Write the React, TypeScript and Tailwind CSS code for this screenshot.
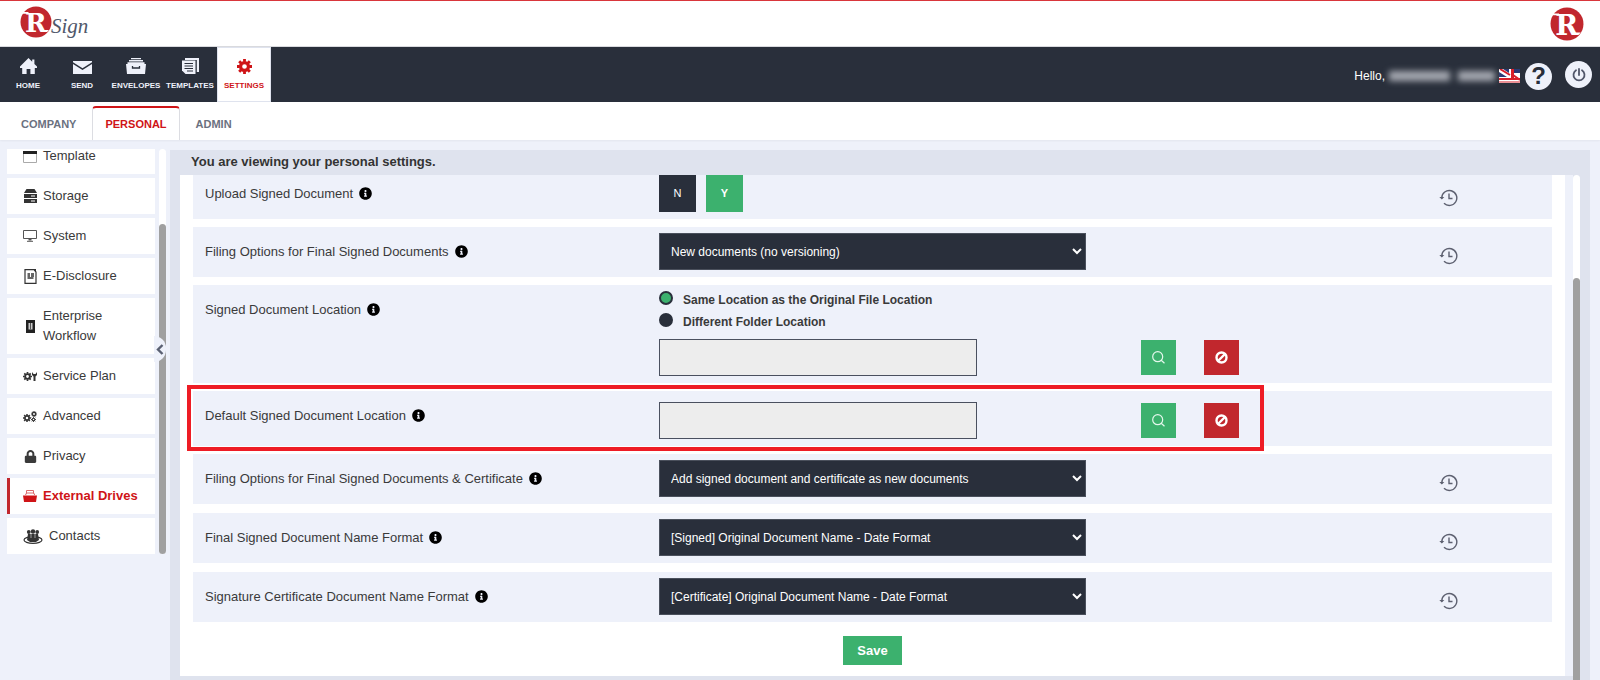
import React, { useState } from "react"
import { FaInfoCircle, FaLock } from "react-icons/fa"

/* ---------- icons ---------- */

const HomeIcon = () => (
    <svg width="17" height="16" viewBox="0 0 17 16" fill="currentColor">
        <path d="M8.500 0 0 8.600V10h2.200v6h4.400v-5h3.800v5h4.400v-6H17V8.600l-2.600-2.700V1.600h-2.200v2.100z" />
    </svg>
)

const SendIcon = () => (
    <svg width="19" height="13" viewBox="0 0 19 13" fill="currentColor">
        <path d="M0 0h19v1.300L9.500 7.200 0 1.300z" />
        <path d="M0 3l9.500 6L19 3v10H0z" />
    </svg>
)

const EnvelopesIcon = () => (
    <svg width="20" height="16" viewBox="0 0 20 16" fill="currentColor">
        <path d="M5 0h10v1.200H5zM3 2h14v1.500H3zM1.500 4.300h17V6H20l-1 10H1L0 6h1.500z" />
        <path d="M6.500 8v2h7V8" fill="none" stroke="#292f3b" strokeWidth="1.300" />
    </svg>
)

const TemplatesIcon = () => (
    <svg width="17" height="16" viewBox="0 0 17 16" fill="currentColor">
        <path d="M3 0h14v14h-2.200V2H3z" />
        <path d="M0 2.500h13.500V16H3.500L0 12.500z" />
        <path d="M2.500 5.500h8.500M2.500 8h8.500M2.500 10.500h8.500M5 13h6" stroke="#292f3b" strokeWidth="1" />
    </svg>
)

// eight-tooth gear, teeth are drawn as short spokes
const GearIcon = ({ size }: { size: number }) => (
    <svg width={size} height={size} viewBox="0 0 16 16" fill="none" stroke="currentColor">
        <circle cx="8" cy="8" r="4.200" strokeWidth="3.400" />
        <path d="M8 0v3M8 13v3M0 8h3M13 8h3M2.300 2.300l2.200 2.200M11.500 11.500l2.200 2.200M13.700 2.300l-2.200 2.200M4.500 11.500l-2.200 2.200" strokeWidth="3" />
    </svg>
)

const PowerIcon = () => (
    <svg width="14" height="14" viewBox="0 0 14 14" fill="none" stroke="#50566a" strokeWidth="1.800" strokeLinecap="round">
        <path d="M4 2.300a5.500 5.500 0 1 0 6 0M7 1v6" />
    </svg>
)

const FlagIcon = () => (
    <svg width="21" height="14" viewBox="0 0 21 14">
        <path fill="#fff" d="M0 0h21v14H0z" />
        <path fill="#2b3a74" d="M0 3l8 5H0zM4 0h6v4zM15 0h6v4h-6z" />
        <path stroke="#d8202a" strokeWidth="2" d="M1 0l10 6M21 11l-7-5" />
        <path fill="#d8202a" d="M12 0h3v9h6v2H0V9h12zM0 12.500h21v1H0z" />
    </svg>
)

const HistoryIcon = () => (
    <svg width="19" height="18" viewBox="0 0 19 18" fill="none" stroke="#5d6070" strokeWidth="1.400">
        <path d="M2.800 9.500V9A7.500 7.500 0 1 1 5 14.300" />
        <path d="M10 4.500v5h3.500" />
        <path d="M.3 8l2.500 2.600L5.300 8z" fill="#5d6070" stroke="none" />
    </svg>
)

const SearchIcon = () => (
    <svg width="13" height="13" viewBox="0 0 13 13" fill="none" stroke="#e4f7ec" strokeWidth="1.200">
        <circle cx="5.700" cy="5.700" r="5" />
        <path d="M9.200 9.200l3.300 3" />
    </svg>
)

const BanIcon = () => (
    <svg width="13" height="13" viewBox="0 0 13 13" fill="none" stroke="#fff" strokeWidth="2.400">
        <circle cx="6.500" cy="6.500" r="5" />
        <path d="M10 3l-7 7" />
    </svg>
)

const TemplateIcon = () => (
    <svg width="14" height="13" viewBox="0 0 14 13">
        <path d="M.5 1.500h13v11H.5z" fill="#fff" stroke="#aaa" />
        <path d="M0 1h14v3H0z" fill="#222" />
    </svg>
)

const StorageIcon = () => (
    <svg width="13" height="14" viewBox="0 0 13 14" fill="#333">
        <path d="M2.500 0h8L13 4H0zM0 5h13v4H0zM0 10h13v4H0z" />
        <path d="M7 7h4M7 12h4" stroke="#fff" />
    </svg>
)

const SystemIcon = () => (
    <svg width="14" height="12" viewBox="0 0 14 12" fill="none" stroke="#555">
        <path d="M.5.5h13v8H.5z" />
        <path d="M7 8.500v2" strokeWidth="3" />
        <path d="M4 11.300h6" />
    </svg>
)

const DisclosureIcon = () => (
    <svg width="13" height="15" viewBox="0 0 13 15" fill="none" stroke="#333">
        <path d="M1 .7h9L12 3v11.300H1z" strokeWidth="1.200" />
        <path d="M9 0h3v3z" fill="#333" stroke="none" />
        <path d="M3.500 5h2.500M3.500 7h2.500M7 5h3M7 7h3M3.500 9h6" strokeWidth="1.300" />
    </svg>
)

const WorkflowIcon = () => (
    <svg width="9" height="13" viewBox="0 0 9 13">
        <path d="M0 0h9v13H0z" fill="#222" />
        <path d="M2.500 3h4v6.500h-4z" fill="#ccc" />
        <path d="M4.500 3v6.500" stroke="#555" />
    </svg>
)

const ServiceIcon = () => (
    <span className="flex items-center text-[#333]">
        <GearIcon size={9} />
        <svg width="5" height="9" viewBox="0 0 5 9" fill="#333">
            <path d="M0 0l1.500 2h2L5 0v3L3.500 4.500V9h-2V4.500L0 3z" />
        </svg>
    </span>
)

const AdvancedIcon = () => (
    <span className="flex items-end text-[#333]">
        <GearIcon size={8} />
        <span className="flex flex-col">
            <GearIcon size={6} />
            <GearIcon size={5} />
        </span>
    </span>
)

const DrivesIcon = () => (
    <svg width="14" height="12" viewBox="0 0 14 12" fill="#cf1417">
        <path d="M3.500 3.500v-3h7v3M2.500 5l1-2h7.200l1 2" fill="none" stroke="#dc6a6c" />
        <path d="M0 5.500h14L13 12H1z" />
    </svg>
)

const ContactsIcon = () => (
    <svg width="20" height="15" viewBox="0 0 20 15" fill="#333">
        <ellipse cx="10" cy="11" rx="9" ry="3.300" fill="none" stroke="#333" strokeWidth="1.200" />
        <circle cx="5.800" cy="3" r="1.900" />
        <circle cx="10" cy="2.500" r="2.200" />
        <circle cx="14.200" cy="3" r="1.900" />
        <path d="M4 11l1-6h10l1 6-3 2H7z" />
        <path d="M8 5v4M12 5v4" stroke="#ccc" strokeWidth=".7" />
    </svg>
)

const RBadge = () => (
    <>
        <circle cx="16" cy="16" r="15.500" fill="#c1272d" />
        <path d="M2.500 6h6v1.800h-7zM21 24h8l-2 2h-6z" fill="#fff" />
        <text x="5" y="26" fontSize="26" fontWeight="bold" fill="#fff" className="font-['DejaVu_Serif',serif]">R</text>
    </>
)

/* ---------- data ---------- */

const navItems = [
    { label: "HOME", icon: <HomeIcon /> },
    { label: "SEND", icon: <SendIcon /> },
    { label: "ENVELOPES", icon: <EnvelopesIcon /> },
    { label: "TEMPLATES", icon: <TemplatesIcon /> },
    { label: "SETTINGS", icon: <GearIcon size={15} /> },
]

const sideItems = [
    { label: "Template", icon: <TemplateIcon /> },
    { label: "Storage", icon: <StorageIcon /> },
    { label: "System", icon: <SystemIcon /> },
    { label: "E-Disclosure", icon: <DisclosureIcon /> },
    { label: "Enterprise Workflow", icon: <WorkflowIcon /> },
    { label: "Service Plan", icon: <ServiceIcon /> },
    { label: "Advanced", icon: <AdvancedIcon /> },
    { label: "Privacy", icon: <FaLock size={13} /> },
    { label: "External Drives", icon: <DrivesIcon /> },
    { label: "Contacts", icon: <ContactsIcon /> },
]

/* ---------- settings rows ---------- */

type RowProps = {
    label: string
    htmlFor?: string
    history?: boolean
    actions?: React.ReactNode
    highlight?: boolean
    children: React.ReactNode
}

const Row: React.FC<RowProps> = ({ label, htmlFor, history, actions, highlight, children }) => (
    <div className="relative grid grid-cols-12 bg-[#eef1fa]">
        <div className="col-span-4 flex items-start gap-[6px] pl-3 pt-[15px] leading-5">
            <label htmlFor={htmlFor}>{label}</label>
            <FaInfoCircle size={13} className="mt-[3px] text-black" />
        </div>
        <div className="col-span-4 px-[13px] pb-[7px] pt-[6px]">{children}</div>
        <div className="col-span-3 flex items-end gap-7 pb-2 pl-[42px]">{actions}</div>
        <div className="pt-5">
            {history && <button type="button" aria-label="History" className="block"><HistoryIcon /></button>}
        </div>
        {highlight && <div className="pointer-events-none absolute -bottom-[5px] -left-[6px] -top-[6px] w-[1077px] border-4 border-[#ee1c25]" />}
    </div>
)

const DarkSelect = ({ id, option }: { id: string; option: string }) => (
    <select id={id} className="block h-[37px] w-full border border-[#4a505c] bg-[#292f3b] px-[7px] text-xs text-white">
        <option>{option}</option>
    </select>
)

const FolderActions = () => (
    <>
        <button type="button" aria-label="Search folder" className="flex size-[35px] items-center justify-center bg-[#3cb16e]"><SearchIcon /></button>
        <button type="button" aria-label="Clear folder" className="flex size-[35px] items-center justify-center bg-[#c1272d]"><BanIcon /></button>
    </>
)

const FolderInput = ({ id }: { id: string }) => (
    <input id={id} type="text" disabled className="block h-[37px] w-[318px] border border-[#4a505f] bg-[#ededed] px-2" />
)

export default function App() {
    const [upload, setUpload] = useState<string>("Y")
    const [location, setLocation] = useState<string>("same")

    const radioClass = "size-[14px] appearance-none rounded-full border-2 border-[#292f3b] bg-[#292f3b] checked:bg-[#3cb16e]"

    return (
        <div className="flex min-h-screen flex-col overflow-x-hidden bg-[#eef1fa] font-['Liberation_Sans',Arial,sans-serif] text-[13px] text-[#3a3a3a]">
            <header className="flex h-[47px] items-start justify-between border-b border-t border-b-[#d9dade] border-t-[#d9363b] bg-white pl-5 pr-4">
                <a href="#" aria-label="RSign home" className="mt-[5px]">
                    <svg width="80" height="40" viewBox="0 0 80 40">
                        <RBadge />
                        <text x="31" y="27" fontSize="21" fontStyle="italic" fill="#50586b" className="font-['Liberation_Serif',serif]">Sign</text>
                    </svg>
                </a>
                <svg className="mt-[6px]" width="34" height="34" viewBox="0 0 32 32"><RBadge /></svg>
            </header>

            <div className="flex h-[55px] items-stretch justify-between bg-[#292f3b] text-white">
                <nav className="flex pl-px">
                    {navItems.map((item) => (
                        <a
                            key={item.label}
                            href="#"
                            className={
                                item.label === "SETTINGS"
                                    ? "flex w-[54px] flex-col items-center border border-[#dfe3ee] bg-white pt-[10px] text-[#cf1417]"
                                    : "flex w-[54px] flex-col items-center pt-[11px] text-[#eef1fa]"
                            }
                        >
                            <span className="flex h-4 items-end">{item.icon}</span>
                            <span className="mt-[6px] text-[8px] font-bold leading-3">{item.label}</span>
                        </a>
                    ))}
                </nav>
                <div className="flex items-center pr-2 pt-[3px]">
                    <span className="text-xs">Hello,</span>
                    <span className="ml-1 flex w-[106px] gap-2 blur-[3px]">
                        <span className="h-[10px] flex-[5] bg-[#a5a8b0]" />
                        <span className="h-[10px] flex-[3] bg-[#a5a8b0]" />
                    </span>
                    <span className="ml-1"><FlagIcon /></span>
                    <button aria-label="Help" className="ml-[5px] flex size-[27px] items-center justify-center rounded-full bg-[#eef1fa] text-2xl font-bold text-[#292f3b]">?</button>
                    <button aria-label="Log out" className="mb-[3px] ml-[13px] flex size-[27px] items-center justify-center rounded-full bg-[#eef1fa]"><PowerIcon /></button>
                </div>
            </div>

            <nav className="flex h-[38px] items-end gap-1 bg-white pl-[9px] text-[11px] font-bold leading-[32px] text-[#6b7180] shadow-xs">
                <a href="#" className="px-3">COMPANY</a>
                <a href="#" className="rounded-t-sm border-x border-t-2 border-x-[#dcdde2] border-t-[#cf1417] px-3 text-[#cf1417]">PERSONAL</a>
                <a href="#" className="px-3">ADMIN</a>
            </nav>

            <div className="flex flex-1">
                <aside className="relative flex self-start pl-[7px] pt-[9px]">
                    <div className="w-[148px] overflow-hidden">
                        <ul className="-mt-[11px] flex flex-col gap-1">
                            {sideItems.map((item) => (
                                <li key={item.label}>
                                    <a
                                        href="#"
                                        className={
                                            item.label === "External Drives"
                                                ? "flex min-h-[36px] items-center gap-[6px] border-l-[3px] border-[#c1272d] bg-white pl-[13px] font-bold text-[#cf1417]"
                                                : "flex min-h-[36px] items-center gap-[6px] bg-white py-[8px] pl-4 leading-5"
                                        }
                                    >
                                        <span className="flex min-w-[14px] justify-center">{item.icon}</span>
                                        <span className="w-min min-w-0 flex-1">{item.label}</span>
                                    </a>
                                </li>
                            ))}
                        </ul>
                    </div>
                    <div className="ml-1 flex w-[7px] rounded-full bg-white">
                        <div className="mt-[75px] flex-1 rounded-full bg-[#a0a0a0]" />
                    </div>
                    <button aria-label="Collapse menu" className="absolute right-0 top-[196px] flex h-[26px] w-[12px] items-center justify-center rounded-r-xl bg-[#eef1fa]">
                        <svg width="8" height="11" viewBox="0 0 8 11" fill="none" stroke="#5a6072" strokeWidth="2.400">
                            <path d="M6.500 1L2 5.500 6.500 10" />
                        </svg>
                    </button>
                </aside>

                <main className="ml-1 mr-[10px] mt-[10px] flex flex-1 flex-col bg-[#dfe3ee] px-[10px]">
                    <h1 className="h-[25px] pl-[11px] pt-px text-[13px] font-bold leading-[22px] text-[#333]">You are viewing your personal settings.</h1>
                    <div className="flex flex-1">
                        <div className="mb-1 flex flex-1 bg-[#eef1fa] pr-2">
                            <form className="flex flex-1 flex-col overflow-hidden bg-white pb-[11px] pl-[13px] pr-[13px]" onSubmit={(e) => e.preventDefault()}>
                                <div className="-mt-[6px] flex flex-col gap-2">
                                    <Row label="Upload Signed Document" history>
                                        <div className="flex gap-[10px] text-[11px] text-white">
                                            <button type="button" onClick={() => setUpload("N")} className={upload === "N" ? "size-[37px] bg-[#3cb16e] font-bold" : "size-[37px] bg-[#292f3b]"}>N</button>
                                            <button type="button" onClick={() => setUpload("Y")} className={upload === "Y" ? "size-[37px] bg-[#3cb16e] font-bold" : "size-[37px] bg-[#292f3b]"}>Y</button>
                                        </div>
                                    </Row>
                                    <Row label="Filing Options for Final Signed Documents" htmlFor="filing" history>
                                        <DarkSelect id="filing" option="New documents (no versioning)" />
                                    </Row>
                                    <Row label="Signed Document Location" htmlFor="signedLoc" actions={<FolderActions />}>
                                        <div className="mb-1 text-xs font-bold">
                                            <label className="flex h-[22px] items-start gap-[10px] leading-[18px]">
                                                <input type="radio" name="loc" checked={location === "same"} onChange={() => setLocation("same")} className={radioClass} />
                                                Same Location as the Original File Location
                                            </label>
                                            <label className="flex h-[22px] items-start gap-[10px] leading-[18px]">
                                                <input type="radio" name="loc" checked={location === "other"} onChange={() => setLocation("other")} className={radioClass} />
                                                Different Folder Location
                                            </label>
                                        </div>
                                        <FolderInput id="signedLoc" />
                                    </Row>
                                    <Row label="Default Signed Document Location" htmlFor="defaultLoc" highlight actions={<FolderActions />}>
                                        <div className="pt-[5px]"><FolderInput id="defaultLoc" /></div>
                                    </Row>
                                </div>
                                <div className="mt-2 flex flex-col gap-[9px]">
                                    <Row label="Filing Options for Final Signed Documents & Certificate" htmlFor="filingCert" history>
                                        <DarkSelect id="filingCert" option="Add signed document and certificate as new documents" />
                                    </Row>
                                    <Row label="Final Signed Document Name Format" htmlFor="nameFormat" history>
                                        <DarkSelect id="nameFormat" option="[Signed] Original Document Name - Date Format" />
                                    </Row>
                                    <Row label="Signature Certificate Document Name Format" htmlFor="certFormat" history>
                                        <DarkSelect id="certFormat" option="[Certificate] Original Document Name - Date Format" />
                                    </Row>
                                </div>
                                <button type="submit" className="mt-[14px] h-[29px] w-[59px] self-center bg-[#3cb16e] text-[13px] font-bold text-white">Save</button>
                            </form>
                        </div>
                        <div className="flex w-[7px] rounded-t-full bg-white">
                            <div className="mt-[103px] flex-1 rounded-t-full bg-[#a0a0a0]" />
                        </div>
                    </div>
                </main>
            </div>
        </div>
    )
}
